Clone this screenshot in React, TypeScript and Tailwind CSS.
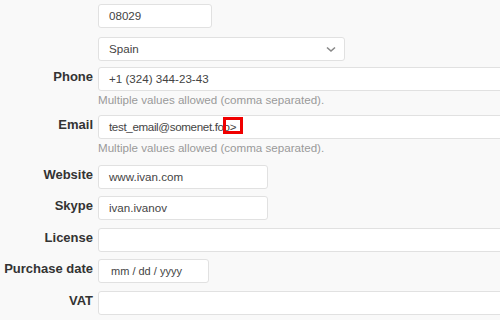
import React from "react";

const font = { fontFamily: '"Liberation Sans", Arial, sans-serif' };

function Label({ children }: { children?: React.ReactNode }) {
  return (
    <div className="w-[93px] shrink-0 text-right text-[13px] font-bold text-[#333] leading-[20px]">
      {children}
    </div>
  );
}

function Box({ w, children }: { w: string; children?: React.ReactNode }) {
  return (
    <div
      className={
        "h-[24px] shrink-0 bg-white border border-[#e1e1e1] rounded-[3px] flex items-center pl-[10px] text-[11.6px] text-[#444] " +
        w
      }
    >
      {children}
    </div>
  );
}

function Row({ label, children, mt }: { label?: string; children: React.ReactNode; mt: string }) {
  return (
    <div className={"flex items-start gap-[5px] " + mt}>
      <Label>{label}</Label>
      {children}
    </div>
  );
}

function Help() {
  return (
    <div className="text-[11.6px] text-[#999] leading-[18px]">Multiple values allowed (comma separated).</div>
  );
}

export default function App() {
  return (
    <div className="w-[500px] h-[320px] overflow-hidden bg-[#f9f9f9] flex flex-col pt-[4px]" style={font}>
      <Row mt="mt-0">
        <Box w="w-[114px]">08029</Box>
      </Row>
      <Row mt="mt-[9px]">
        <div className="w-[247px] h-[24px] bg-white border border-[#e1e1e1] rounded-[3px] flex items-center justify-between pl-[10px] pr-[8px] text-[11.6px] text-[#444]">
          <span>Spain</span>
          <svg width="10" height="7" viewBox="0 0 10 7" fill="none">
            <path d="M1 1.5 L5 5 L9 1.5" stroke="#888" strokeWidth="1.6" />
          </svg>
        </div>
      </Row>
      <Row mt="mt-[6px]" label="Phone">
        <div className="flex-1 flex flex-col">
          <Box w="w-[calc(100%+10px)]">+1 (324) 344-23-43</Box>
          <Help />
        </div>
      </Row>
      <Row mt="mt-[6px]" label="Email">
        <div className="flex-1 flex flex-col">
          <div className="relative h-[24px]">
            <Box w="w-[calc(100%+10px)]">
              <span className="tracking-[-0.35px]">test_email@somenet.foo&gt;</span>
            </Box>
            <div className="absolute left-[125px] top-[2px] w-[20px] h-[17px] border-[3px] border-[#f00000]" />
          </div>
          <Help />
        </div>
      </Row>
      <Row mt="mt-[8px]" label="Website">
        <Box w="w-[170px]">www.ivan.com</Box>
      </Row>
      <Row mt="mt-[7px]" label="Skype">
        <Box w="w-[170px]">ivan.ivanov</Box>
      </Row>
      <Row mt="mt-[8px]" label="License">
        <Box w="flex-1 mr-[-10px]" />
      </Row>
      <Row mt="mt-[7px]" label="Purchase date">
        <Box w="w-[111px]">
          <span className="text-[11px] pl-[2px]">mm / dd / yyyy</span>
        </Box>
      </Row>
      <Row mt="mt-[8px]" label="VAT">
        <Box w="flex-1 mr-[-10px]" />
      </Row>
    </div>
  );
}
